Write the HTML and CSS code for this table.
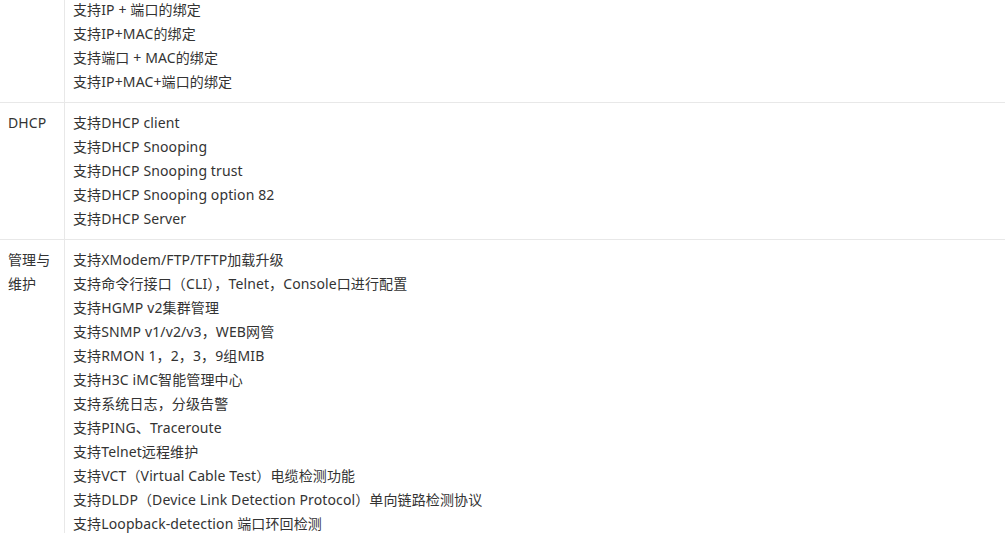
FILE: index.html
```
<!DOCTYPE html>
<html lang="zh-CN">
<head>
    <meta charset="UTF-8">
    <meta name="viewport" content="width=device-width, initial-scale=1.0">
    <title>产品规格</title>
    <link rel="stylesheet" href="styles.css">
</head>
<body>
    <table class="spec">
        <tr>
            <td class="name"></td>
            <td class="detail">
                <p>支持IP + 端口的绑定</p>
                <p>支持IP+MAC的绑定</p>
                <p>支持端口 + MAC的绑定</p>
                <p>支持IP+MAC+端口的绑定</p>
            </td>
        </tr>
        <tr>
            <td class="name">DHCP</td>
            <td class="detail">
                <p>支持DHCP client</p>
                <p>支持DHCP Snooping</p>
                <p>支持DHCP Snooping trust</p>
                <p>支持DHCP Snooping option 82</p>
                <p>支持DHCP Server</p>
            </td>
        </tr>
        <tr>
            <td class="name">管理与维护</td>
            <td class="detail">
                <p>支持XModem/FTP/TFTP加载升级</p>
                <p>支持命令行接口（CLI），Telnet，Console口进行配置</p>
                <p>支持HGMP v2集群管理</p>
                <p>支持SNMP v1/v2/v3，WEB网管</p>
                <p>支持RMON 1，2，3，9组MIB</p>
                <p>支持H3C iMC智能管理中心</p>
                <p>支持系统日志，分级告警</p>
                <p>支持PING、Traceroute</p>
                <p>支持Telnet远程维护</p>
                <p>支持VCT（Virtual Cable Test）电缆检测功能</p>
                <p>支持DLDP（Device Link Detection Protocol）单向链路检测协议</p>
                <p>支持Loopback-detection 端口环回检测</p>
            </td>
        </tr>
    </table>
</body>
</html>
```

FILE: styles.css
```
body {
    margin: 0;
    background-color: #ffffff;
    color: #333333;
    font-family: "Noto Sans", "Noto Sans CJK SC", sans-serif;
    font-size: 14px;
    line-height: 24px;
    letter-spacing: 0.12px;
    overflow: hidden;
}
.spec {
    width: 100%;
    margin-top: -10px;
    border-collapse: collapse;
}
.spec td {
    vertical-align: top;
    padding: 8px;
    border-top: 1px solid #e8e8e8;
}
.spec tr:first-child td {
    border-top: none;
}
.spec .name {
    width: 48px;
    border-right: 1px solid #e8e8e8;
}
.spec p {
    margin: 0;
}
```
